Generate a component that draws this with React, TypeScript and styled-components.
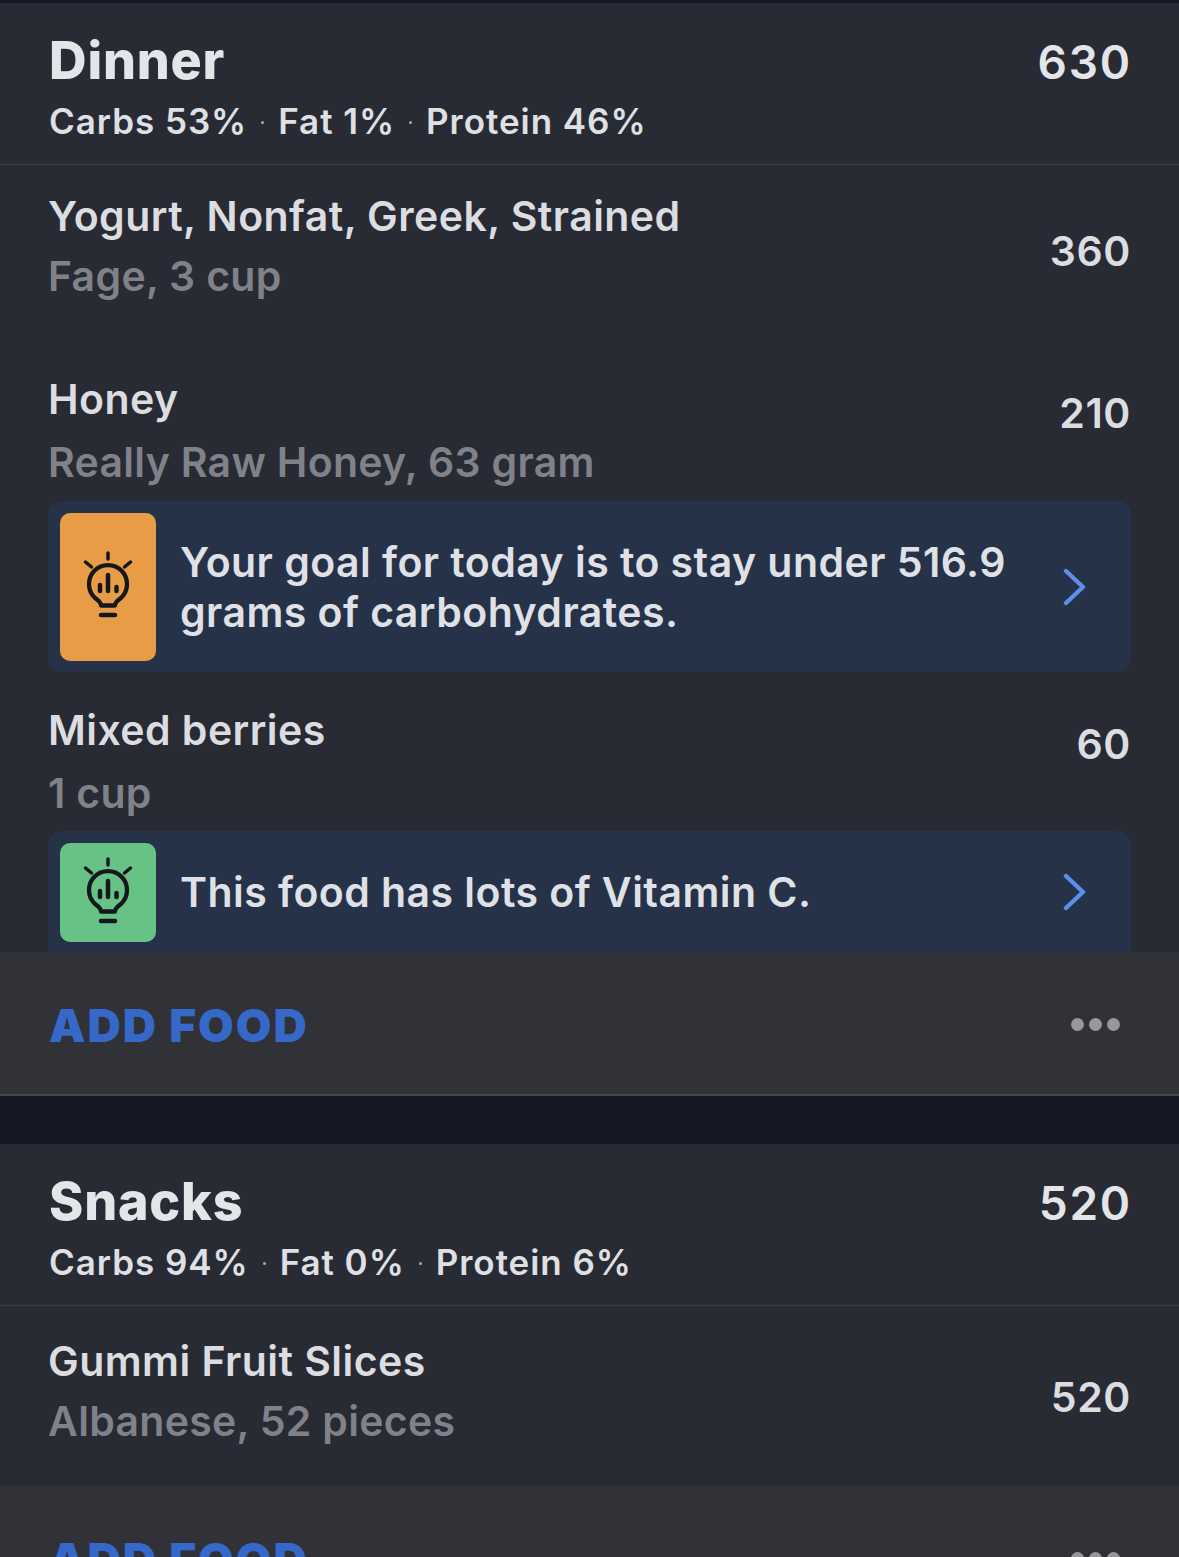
import React from 'react';
import styled, { createGlobalStyle } from 'styled-components';

const GlobalStyle = createGlobalStyle`
  html, body {
    margin: 0;
    padding: 0;
    background: #161925;
    font-family: Inter, "Noto Sans", sans-serif;
  }
`;

const Page = styled.div`
  width: 1179px;
  height: 1557px;
  overflow: hidden;
  padding-top: 3px;
  box-sizing: border-box;
  background: #161925;
`;

const Section = styled.section`
  background: #282a34;
`;

const SectionGap = styled.div`
  height: 48px;
`;

const MealHeader = styled.header`
  height: 162px;
  box-sizing: border-box;
  padding: 0 47px 0 50px;
  display: flex;
  justify-content: space-between;
  align-items: flex-start;
  border-bottom: 1px solid #3a3c47;
`;

const MealTitle = styled.h2`
  margin: 27px 0 0 -1px;
  font-size: 52px;
  line-height: 62px;
  font-weight: 800;
  letter-spacing: 0.8px;
  color: #e4e5e8;
`;

const Macros = styled.div`
  margin: 7px 0 0 -1px;
  display: flex;
  align-items: center;
  font-size: 35px;
  line-height: 44px;
  font-weight: 600;
  letter-spacing: 0.95px;
  color: #dfe0e4;
`;

const Dot = styled.span`
  width: 3px;
  height: 3px;
  border-radius: 50%;
  background: #a9abb2;
  margin: 2px 14px 0;
`;

const MealTotal = styled.div`
  margin-top: 30px;
  font-size: 46px;
  line-height: 58px;
  font-weight: 600;
  letter-spacing: 1.8px;
  color: #e4e5e8;
`;

const FoodRow = styled.div<{ $height: number; $top: number; $numberTop: number }>`
  height: ${(p) => p.$height}px;
  box-sizing: border-box;
  padding: ${(p) => p.$top}px 48px 0;
  display: flex;
  justify-content: space-between;
  align-items: flex-start;

  > :last-child {
    margin-top: ${(p) => p.$numberTop}px;
  }
`;

const FoodName = styled.div`
  font-size: 41px;
  line-height: 50px;
  font-weight: 600;
  letter-spacing: 0.45px;
  color: #dcdde1;
`;

const FoodDetail = styled.div<{ $gap: number }>`
  margin-top: ${(p) => p.$gap}px;
  font-size: 41px;
  line-height: 50px;
  font-weight: 600;
  letter-spacing: 0.3px;
  color: #80828a;
`;

const Calories = styled.div`
  font-size: 41px;
  line-height: 50px;
  font-weight: 600;
  letter-spacing: 0.6px;
  color: #dcdde1;
`;

const Tip = styled.div<{ $height: number; $open?: boolean }>`
  height: ${(p) => p.$height}px;
  box-sizing: border-box;
  margin: 0 48px;
  padding: 12px 43px 0 12px;
  display: flex;
  align-items: flex-start;
  background: #253248;
  border-radius: ${(p) => (p.$open ? '14px 14px 0 0' : '14px')};
`;

const TipBadge = styled.div<{ $color: string; $height: number }>`
  flex: none;
  width: 96px;
  height: ${(p) => p.$height}px;
  display: flex;
  align-items: center;
  justify-content: center;
  background: ${(p) => p.$color};
  border-radius: 10px;
`;

const TipBody = styled.div`
  flex: 1;
  align-self: stretch;
  display: flex;
  align-items: center;
  padding-bottom: 11px;
`;

const TipText = styled.div`
  flex: 1;
  margin-left: 24px;
  font-size: 41px;
  line-height: 50px;
  font-weight: 600;
  letter-spacing: 0.45px;
  color: #dfe1e6;
`;

const Footer = styled.div<{ $border?: boolean }>`
  height: ${(p) => (p.$border ? 144 : 142)}px;
  box-sizing: border-box;
  padding: 2px 59px 0 49px;
  display: flex;
  justify-content: space-between;
  align-items: center;
  background: #313238;
  border-bottom: ${(p) => (p.$border ? '2px solid #45464f' : 'none')};
`;

const AddFood = styled.div`
  margin-top: 2px;
  font-size: 46px;
  line-height: 56px;
  font-weight: 900;
  letter-spacing: 2px;
  color: #3568c9;
`;

const More = styled.div`
  display: flex;
  gap: 5px;
`;

const MoreDot = styled.span`
  width: 13px;
  height: 13px;
  border-radius: 50%;
  background: #97989e;
`;

const BulbSvg = styled.svg`
  margin-bottom: 6px;
`;

const BulbIcon = () => (
  <BulbSvg width="50" height="68" viewBox="0 0 50 68" fill="none" stroke="#14181c" strokeLinecap="round">
    <path d="M25 3v6M2.500 12l6 5M47.500 12l-6 5" strokeWidth="3.500" />
    <path
      d="M18 55.500C18 52 15 50.500 12 48A19 19 0 1 1 38 48C35 50.500 32 52 32 55.500Z"
      strokeWidth="4.300"
      strokeLinejoin="round"
    />
    <path d="M25 25v16M17 35v6M33.500 37v4" strokeWidth="4.500" />
    <path d="M18 65h14" strokeWidth="4.500" />
  </BulbSvg>
);

const Chevron = () => (
  <svg width="26" height="38" viewBox="0 0 26 38" fill="none" stroke="#5b8fe8" strokeWidth="4.400" strokeLinecap="round" strokeLinejoin="round">
    <path d="M4 3l17 16L4 35" />
  </svg>
);

const MealHead: React.FC<{ title: string; total: number; carbs: string; fat: string; protein: string }> = ({
  title,
  total,
  carbs,
  fat,
  protein,
}) => (
  <MealHeader>
    <div>
      <MealTitle>{title}</MealTitle>
      <Macros>
        <span>Carbs {carbs}</span>
        <Dot />
        <span>Fat {fat}</span>
        <Dot />
        <span>Protein {protein}</span>
      </Macros>
    </div>
    <MealTotal>{total}</MealTotal>
  </MealHeader>
);

const AddFoodBar: React.FC<{ border?: boolean }> = ({ border }) => (
  <Footer $border={border}>
    <AddFood>ADD FOOD</AddFood>
    <More>
      <MoreDot />
      <MoreDot />
      <MoreDot />
    </More>
  </Footer>
);

export default function App() {
  return (
    <Page>
      <GlobalStyle />
      <Section>
        <MealHead title="Dinner" total={630} carbs="53%" fat="1%" protein="46%" />
        <FoodRow $height={180} $top={26} $numberTop={35}>
          <div>
            <FoodName>Yogurt, Nonfat, Greek, Strained</FoodName>
            <FoodDetail $gap={10}>Fage, 3 cup</FoodDetail>
          </div>
          <Calories>360</Calories>
        </FoodRow>
        <FoodRow $height={156} $top={29} $numberTop={14}>
          <div>
            <FoodName>Honey</FoodName>
            <FoodDetail $gap={13}>Really Raw Honey, 63 gram</FoodDetail>
          </div>
          <Calories>210</Calories>
        </FoodRow>
        <Tip $height={171}>
          <TipBadge $color="#e89c45" $height={148}>
            <BulbIcon />
          </TipBadge>
          <TipBody>
            <TipText>Your goal for today is to stay under 516.9 grams of carbohydrates.</TipText>
            <Chevron />
          </TipBody>
        </Tip>
        <FoodRow $height={159} $top={33} $numberTop={14}>
          <div>
            <FoodName>Mixed berries</FoodName>
            <FoodDetail $gap={13}>1 cup</FoodDetail>
          </div>
          <Calories>60</Calories>
        </FoodRow>
        <Tip $height={121} $open>
          <TipBadge $color="#66c285" $height={99}>
            <BulbIcon />
          </TipBadge>
          <TipBody>
            <TipText>This food has lots of Vitamin C.</TipText>
            <Chevron />
          </TipBody>
        </Tip>
        <AddFoodBar border />
      </Section>
      <SectionGap />
      <Section>
        <MealHead title="Snacks" total={520} carbs="94%" fat="0%" protein="6%" />
        <FoodRow $height={180} $top={30} $numberTop={36}>
          <div>
            <FoodName>Gummi Fruit Slices</FoodName>
            <FoodDetail $gap={10}>Albanese, 52 pieces</FoodDetail>
          </div>
          <Calories>520</Calories>
        </FoodRow>
        <AddFoodBar />
      </Section>
    </Page>
  );
}
